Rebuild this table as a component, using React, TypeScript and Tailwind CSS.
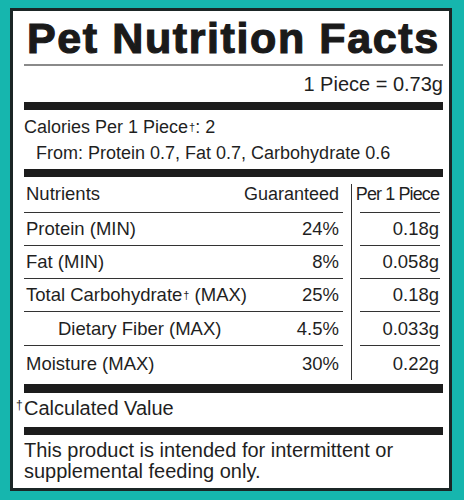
import React from "react";

const rows = [
  { name: "Protein (MIN)", pct: "24%", per: "0.18g" },
  { name: "Fat (MIN)", pct: "8%", per: "0.058g" },
  { name: "Total Carbohydrate", dagger: true, suffix: " (MAX)", pct: "25%", per: "0.18g" },
  { name: "Dietary Fiber (MAX)", indent: true, pct: "4.5%", per: "0.033g" },
  { name: "Moisture (MAX)", pct: "30%", per: "0.22g", last: true },
];

function Dagger() {
  return <sup className="text-[11px] relative -top-[2px] ml-[1px]">†</sup>;
}

export default function App() {
  return (
    <div className="w-[464px] h-[500px] bg-[#16b6ae] pt-[8px] pl-[10px] pr-[12px] pb-[9px] flex font-['Liberation_Sans',Arial,sans-serif] text-[#1f1f1f]">
      <div className="flex-1 bg-white border-[3px] border-[#1b2626] pl-[11px] pr-[6px] pt-[6px] flex flex-col">
        {/* Title */}
        <h1 className="ml-[3px] text-[43px] leading-[42px] font-bold tracking-[1.6px] text-[#1a1a1a] [-webkit-text-stroke:1.2px_#1a1a1a] whitespace-nowrap">
          Pet Nutrition Facts
        </h1>
        <div className="mt-[5px] h-[1.5px] bg-[#8a8a8a]" />
        <p className="mt-[6px] text-[20px] leading-[24px] text-right">1 Piece = 0.73g</p>
        <div className="mt-[6px] h-[8px] bg-[#1c1c1c]" />

        {/* Calories */}
        <div className="mt-[4px] text-[18px] leading-[26px]">
          <p>
            Calories Per 1 Piece<Dagger />: 2
          </p>
          <p className="pl-[12px]">From: Protein 0.7, Fat 0.7, Carbohydrate 0.6</p>
        </div>
        <div className="mt-[3px] h-[8px] bg-[#1c1c1c]" />

        {/* Table */}
        <div className="flex text-[18.5px] leading-[20px]">
          <div className="w-[319px] flex flex-col">
            <div className="h-[36px] flex items-center justify-between pl-[2px] pr-[4px] border-b-[1.5px] border-[#333]">
              <span>Nutrients</span>
              <span className="text-[18px]">Guaranteed</span>
            </div>
            {rows.map((r) => (
              <div
                key={r.name}
                className={`flex items-center justify-between pr-[4px] ${r.indent ? "pl-[34px]" : "pl-[2px]"} ${
                  r.last ? "h-[37px]" : "h-[33.3px] border-b-[1.5px] border-[#333]"
                }`}
              >
                <span>
                  {r.name}
                  {r.dagger && <Dagger />}
                  {r.suffix}
                </span>
                <span>{r.pct}</span>
              </div>
            ))}
          </div>
          <div className="w-[17px] flex justify-center pt-[7px] pb-[3px]">
            <div className="w-[1.5px] bg-[#333]" />
          </div>
          <div className="w-[80px] flex flex-col">
            <div className="h-[36px] flex items-center justify-end pr-[1px] border-b-[1.5px] border-[#333] whitespace-nowrap">
              <span className="text-[18px] tracking-[-0.9px]">Per 1 Piece</span>
            </div>
            {rows.map((r) => (
              <div
                key={r.name}
                className={`flex items-center justify-end pr-[1px] ${
                  r.last ? "h-[37px]" : "h-[33.3px] border-b-[1.5px] border-[#333]"
                }`}
              >
                {r.per}
              </div>
            ))}
          </div>
        </div>
        <div className="mt-[1px] h-[9px] bg-[#1c1c1c]" />

        {/* Footnote */}
        <p className="mt-[3px] text-[20px] leading-[24px]">
          <span className="inline-block w-0 relative -left-[8px] -top-[6px] text-[12px]">†</span>
          Calculated Value
        </p>
        <div className="mt-[4px] h-[8px] bg-[#1c1c1c]" />
        <p className="mt-[5px] text-[20px] leading-[21.5px]">
          This product is intended for intermittent or
          <br />
          supplemental feeding only.
        </p>
      </div>
    </div>
  );
}
